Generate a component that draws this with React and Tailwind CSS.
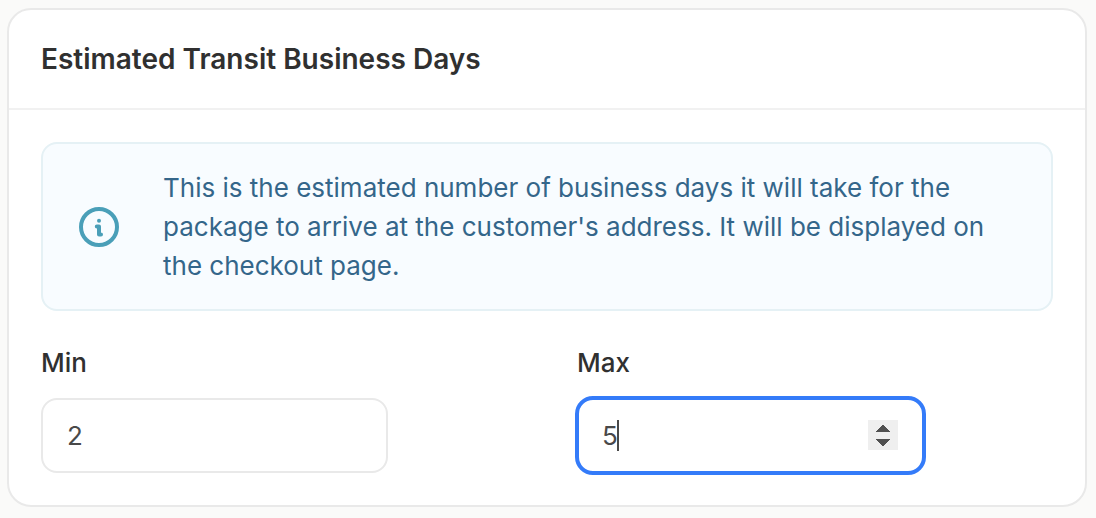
export default function App() {
  return (
    <div className="h-[518px] w-[1096px] overflow-hidden bg-[#fafaf9] px-[7px] pt-2 font-['Inter','Liberation_Sans',sans-serif] text-[#303030]">
      <section className="h-[499px] w-[1080px] rounded-[24px] border-2 border-[#e9e9e9] bg-white">
        <header className="flex h-[100px] items-center border-b-2 border-[#f1f1f1] px-8">
          <h1 className="text-[28px] leading-[40px] font-semibold">Estimated Transit Business Days</h1>
        </header>
        <div className="px-8 pt-8">
          <div className="flex h-[169px] w-[1012px] items-center rounded-[16px] border-2 border-[#e5f1f5] bg-[#f8fcff] pl-9">
            <svg className="size-10 shrink-0" viewBox="0 0 40 40" fill="none" stroke="#4a9fb8" strokeWidth="4" strokeLinecap="round" strokeLinejoin="round">
              <circle cx="20" cy="20" r="18" />
              <path d="M17.8 19.6H20v8h2" />
              <circle cx="20" cy="13.8" r="2" fill="#4a9fb8" stroke="none" />
            </svg>
            <p className="ml-11 text-[26px] leading-[39px] whitespace-nowrap text-[#34668a]">
              This is the estimated number of business days it will take for the<br />
              package to arrive at the customer's address. It will be displayed on<br />
              the checkout page.
            </p>
          </div>
          <div className="mt-8 grid grid-cols-[536px_1fr]">
            <div>
              <div className="text-[26px] leading-[40px] font-medium">Min</div>
              <div className="mt-[15px] flex h-[75px] w-[347px] items-center rounded-[16px] border-2 border-[#e9e9e9] bg-white pl-6 text-[26px] text-[#494949]">2</div>
            </div>
            <div>
              <div className="text-[26px] leading-[40px] font-medium">Max</div>
              <div className="mt-[13px] -ml-[2px] flex h-[79px] w-[351px] items-center rounded-[18px] border-4 border-[#347bf9] bg-white pr-6 pl-[23px] text-[26px] text-[#494949]">
                <span>5</span>
                <span className="-ml-px h-[31px] w-[2px] bg-[#494949]" />
                <span className="mb-px ml-auto flex h-[30px] w-[30px] items-center justify-center bg-[#efefef]">
                  <svg className="size-[30px]" viewBox="0 0 30 30" fill="#505050" shapeRendering="crispEdges">
                    <path d="M8 12L15 4.5l7 7.5zM8 19l7 7.5 7-7.5z" />
                  </svg>
                </span>
              </div>
            </div>
          </div>
        </div>
      </section>
    </div>
  );
}
